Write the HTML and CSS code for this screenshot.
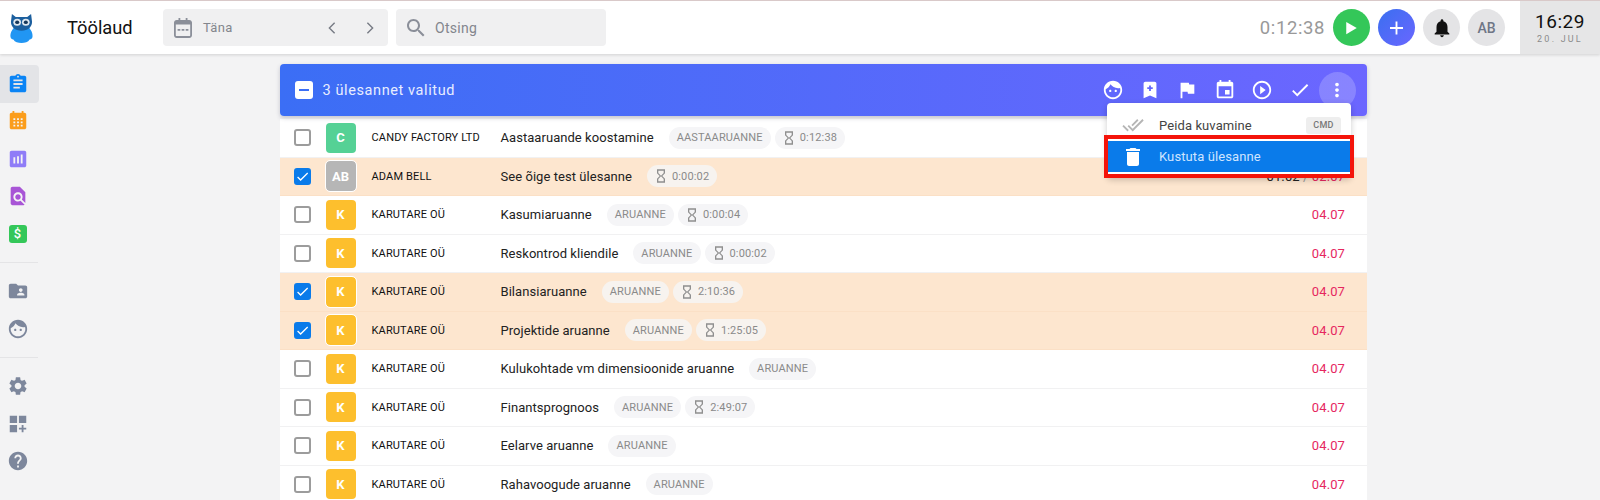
FILE: index.html
```html
<!DOCTYPE html>
<html lang="et">
<head>
<meta charset="utf-8">
<title>Töölaud</title>
<link rel="stylesheet" href="styles.css">
</head>
<body>
<svg class="sprite" xmlns="http://www.w3.org/2000/svg">
  <symbol id="i-hour" viewBox="0 0 24 24"><path d="M6 2v6h.01L6 8.01 10 12l-4 4 .01.01H6V22h12v-5.99h-.01L18 16l-4-4 4-3.99-.01-.01H18V2H6zm10 14.5V20H8v-3.5l4-4 4 4zm-4-5l-4-4V4h8v3.5l-4 4z"/></symbol>
  <symbol id="i-check" viewBox="0 0 24 24"><path d="M9 16.17L4.83 12l-1.42 1.41L9 19 21 7l-1.41-1.41z"/></symbol>
  <symbol id="i-face" viewBox="0 0 24 24"><path d="M9 11.75c-.69 0-1.25.56-1.25 1.25s.56 1.25 1.25 1.25 1.25-.56 1.25-1.25-.56-1.25-1.25-1.25zm6 0c-.69 0-1.25.56-1.25 1.25s.56 1.25 1.25 1.25 1.25-.56 1.25-1.25-.56-1.25-1.25-1.25zM12 2C6.48 2 2 6.48 2 12s4.48 10 10 10 10-4.48 10-10S17.52 2 12 2zm0 18c-4.41 0-8-3.59-8-8 0-.29.02-.58.05-.86 2.36-1.05 4.23-2.98 5.21-5.37C11.07 8.33 14.05 10 17.42 10c.78 0 1.53-.09 2.25-.26.21.71.33 1.47.33 2.26 0 4.41-3.59 8-8 8z"/></symbol>
</svg>

<header class="topbar">
  <svg class="owl" viewBox="0 0 24 34" preserveAspectRatio="none" xmlns="http://www.w3.org/2000/svg">
    <path fill="#2196f3" d="M4 17c-2 2-4 6-3.500 10 .3 2 1.500 3 3 3 1.500 3 5 4 8.500 4s7-1 8.500-4c1.500 0 2.700-1 3-3 .5-4-1.500-8-3.500-10z"/>
    <path fill="#1c5f9e" d="M2 1l4 3.500h12L22 1l1 9c0 6-4 10-11 10S1 16 1 10z"/>
    <circle cx="7.500" cy="10.500" r="4" fill="#dfe7ee"/>
    <circle cx="16.500" cy="10.500" r="4" fill="#dfe7ee"/>
    <circle cx="7.500" cy="10.500" r="2.100" fill="#16375a"/>
    <circle cx="16.500" cy="10.500" r="2.100" fill="#16375a"/>
  </svg>
  <h1 class="page-title">Töölaud</h1>
  <div class="field date-field">
    <svg class="field-icon" viewBox="0 0 20 22" xmlns="http://www.w3.org/2000/svg"><path fill="#8b8f99" fill-rule="evenodd" d="M5 0h2v2h6V0h2v2h2c1.700 0 3 1.300 3 3v14c0 1.700-1.300 3-3 3H3c-1.700 0-3-1.300-3-3V5c0-1.700 1.300-3 3-3h2zM2 7v12c0 .6.400 1 1 1h14c.6 0 1-.4 1-1V7zm2 5h3v2H4zm4.500 0h3v2h-3zm4.500 0h3v2h-3z"/></svg>
    <span class="field-label">Täna</span>
    <svg class="chev chev-left" viewBox="0 0 10 16" xmlns="http://www.w3.org/2000/svg"><path d="M8 2L2 8l6 6"/></svg>
    <svg class="chev" viewBox="0 0 10 16" xmlns="http://www.w3.org/2000/svg"><path d="M2 2l6 6-6 6"/></svg>
  </div>
  <div class="field search-field">
    <svg class="field-icon search-icon" viewBox="3 3 18 18" xmlns="http://www.w3.org/2000/svg"><path fill="#8b8f99" d="M15.500 14h-.79l-.28-.27C15.410 12.590 16 11.110 16 9.500 16 5.910 13.090 3 9.500 3S3 5.910 3 9.500 5.910 16 9.500 16c1.610 0 3.090-.59 4.230-1.570l.27.28v.79l5 4.990L20.490 19l-4.990-5zm-6 0C7.010 14 5 11.990 5 9.500S7.010 5 9.500 5 14 7.010 14 9.500 11.990 14 9.500 14z"/></svg>
    <span class="field-label">Otsing</span>
  </div>
  <div class="top-right">
    <span class="timer">0:12:38</span>
    <span class="round round-green"><svg viewBox="0 0 14 16" xmlns="http://www.w3.org/2000/svg"><path fill="#fff" d="M1 1l12 7-12 7z"/></svg></span>
    <span class="round round-blue"><svg viewBox="0 0 14 14" xmlns="http://www.w3.org/2000/svg"><path fill="#fff" d="M6 0h2v6h6v2H8v6H6V8H0V6h6z"/></svg></span>
    <span class="round round-gray"><svg class="bell" viewBox="0 0 24 24" xmlns="http://www.w3.org/2000/svg"><path fill="#111" d="M12 22c1.100 0 2-.9 2-2h-4c0 1.100.89 2 2 2zm6-6v-5c0-3.070-1.640-5.640-4.500-6.320V4c0-.83-.67-1.500-1.500-1.500s-1.500.67-1.500 1.500v.68C7.630 5.360 6 7.920 6 11v5l-2 2v1h16v-1l-2-2z"/></svg></span>
    <span class="round round-gray round-text">AB</span>
  </div>
  <div class="clock">
    <span class="clock-time">16:29</span>
    <span class="clock-date">20. JUL</span>
  </div>
</header>

<div class="layout">
  <nav class="sidebar">
    <a class="nav-item active"><svg viewBox="0 0 24 24" xmlns="http://www.w3.org/2000/svg"><path fill="#0a84f5" d="M19 3h-4.180C14.400 1.840 13.300 1 12 1c-1.300 0-2.400.84-2.820 2H5c-1.100 0-2 .9-2 2v14c0 1.100.9 2 2 2h14c1.100 0 2-.9 2-2V5c0-1.100-.9-2-2-2zm-7 0c.55 0 1 .45 1 1s-.45 1-1 1-1-.45-1-1 .45-1 1-1zm2 14H7v-2h7v2zm3-4H7v-2h10v2zm0-4H7V7h10v2z"/></svg></a>
    <a class="nav-item"><svg viewBox="0 0 24 24" xmlns="http://www.w3.org/2000/svg"><path fill="#fb9d1c" fill-rule="evenodd" d="M6 1h2v2h8V1h2v2h1c1.100 0 2 .9 2 2v14c0 1.100-.9 2-2 2H5c-1.100 0-2-.9-2-2V5c0-1.100.9-2 2-2h1zM7 9v2h2V9zm4 0v2h2V9zm4 0v2h2V9zm-8 3.500v2h2v-2zm4 0v2h2v-2zm4 0v2h2v-2zM7 16v2h2v-2zm4 0v2h2v-2zm4 0v2h2v-2z"/></svg></a>
    <a class="nav-item"><svg viewBox="0 0 24 24" xmlns="http://www.w3.org/2000/svg"><path fill="#8f7cf7" d="M19 3H5c-1.100 0-2 .9-2 2v14c0 1.100.9 2 2 2h14c1.100 0 2-.9 2-2V5c0-1.100-.9-2-2-2zM9 17H7v-7h2v7zm4 0h-2V9h2v8zm4 0h-2V7h2v10z"/></svg></a>
    <a class="nav-item"><svg viewBox="0 0 24 24" xmlns="http://www.w3.org/2000/svg"><path fill="#a855d6" d="M20 19.590V8l-6-6H6c-1.100 0-1.990.9-1.990 2L4 20c0 1.100.89 2 1.990 2H18c.45 0 .85-.15 1.190-.4l-4.430-4.430c-.8.52-1.740.83-2.760.83-2.760 0-5-2.240-5-5s2.240-5 5-5 5 2.240 5 5c0 1.020-.31 1.960-.83 2.750L20 19.590zM9 13c0 1.660 1.340 3 3 3s3-1.340 3-3-1.340-3-3-3-3 1.340-3 3z"/></svg></a>
    <a class="nav-item"><span class="dollar">$</span></a>
    <hr class="nav-rule">
    <a class="nav-item"><svg viewBox="0 0 24 24" xmlns="http://www.w3.org/2000/svg"><path fill="#7d879c" d="M20 6h-8l-2-2H4c-1.100 0-1.990.9-1.990 2L2 18c0 1.100.9 2 2 2h16c1.100 0 2-.9 2-2V8c0-1.100-.9-2-2-2zm-5 3c1.100 0 2 .9 2 2s-.9 2-2 2-2-.9-2-2 .9-2 2-2zm4 8h-8v-1c0-1.330 2.670-2 4-2s4 .67 4 2v1z"/></svg></a>
    <a class="nav-item"><svg class="gray-fill" viewBox="0 0 24 24" xmlns="http://www.w3.org/2000/svg"><use href="#i-face"/></svg></a>
    <hr class="nav-rule">
    <a class="nav-item"><svg viewBox="0 0 24 24" xmlns="http://www.w3.org/2000/svg"><path fill="#7d879c" d="M19.140 12.940c.04-.3.06-.61.06-.94 0-.32-.02-.64-.07-.94l2.030-1.580c.18-.14.23-.41.12-.61l-1.920-3.320c-.12-.22-.37-.29-.59-.22l-2.390.96c-.5-.38-1.030-.7-1.620-.94l-.36-2.540c-.04-.24-.24-.41-.48-.41h-3.840c-.24 0-.43.17-.47.41l-.36 2.540c-.59.24-1.130.57-1.620.94l-2.390-.96c-.22-.08-.47 0-.59.22L2.740 8.870c-.12.21-.08.47.12.61l2.030 1.580c-.05.3-.09.63-.09.94s.02.64.07.94l-2.030 1.580c-.18.14-.23.41-.12.61l1.920 3.320c.12.22.37.29.59.22l2.390-.96c.5.38 1.030.7 1.620.94l.36 2.540c.05.24.24.41.48.41h3.840c.24 0 .44-.17.47-.41l.36-2.540c.59-.24 1.130-.56 1.620-.94l2.390.96c.22.08.47 0 .59-.22l1.920-3.320c.12-.22.07-.47-.12-.61l-2.010-1.580zM12 15.600c-1.980 0-3.600-1.620-3.600-3.600s1.620-3.600 3.600-3.600 3.600 1.620 3.600 3.600-1.620 3.600-3.600 3.600z"/></svg></a>
    <a class="nav-item"><svg viewBox="0 0 24 24" xmlns="http://www.w3.org/2000/svg"><path fill="#7d879c" d="M3 3h8v8H3zM13 3h8v8h-8zM3 13h8v8H3zM16 13h2v3h3v2h-3v3h-2v-3h-3v-2h3z"/></svg></a>
    <a class="nav-item"><svg viewBox="0 0 24 24" xmlns="http://www.w3.org/2000/svg"><path fill="#7d879c" d="M12 2C6.480 2 2 6.480 2 12s4.480 10 10 10 10-4.480 10-10S17.520 2 12 2zm1 17h-2v-2h2v2zm2.070-7.750l-.9.92C13.450 12.900 13 13.500 13 15h-2v-.5c0-1.100.45-2.100 1.170-2.830l1.240-1.260c.37-.36.59-.86.59-1.410 0-1.100-.9-2-2-2s-2 .9-2 2H8c0-2.210 1.790-4 4-4s4 1.790 4 4c0 .88-.36 1.680-.93 2.250z"/></svg></a>
  </nav>

  <main class="main">
    <section class="card">
      <div class="bulk-bar">
        <span class="bulk-check"></span>
        <span class="bulk-text">3 ülesannet valitud</span>
        <div class="bulk-actions">
          <span class="bulk-btn"><svg viewBox="0 0 24 24" xmlns="http://www.w3.org/2000/svg"><use href="#i-face"/></svg></span>
          <span class="bulk-btn"><svg viewBox="0 0 24 24" xmlns="http://www.w3.org/2000/svg"><path fill-rule="evenodd" d="M17 3H7c-1.100 0-2 .9-2 2v16l7-3 7 3V5c0-1.100-.9-2-2-2zm-2 8h-2v2h-2v-2H9V9h2V7h2v2h2v2z"/></svg></span>
          <span class="bulk-btn"><svg viewBox="0 0 24 24" xmlns="http://www.w3.org/2000/svg"><path d="M14.400 6L14 4H5v17h2v-7h5.600l.4 2h7V6z"/></svg></span>
          <span class="bulk-btn"><svg viewBox="0 0 24 24" xmlns="http://www.w3.org/2000/svg"><path d="M17 12h-5v5h5v-5zM16 1v2H8V1H6v2H5c-1.110 0-1.990.9-1.990 2L3 19c0 1.100.89 2 2 2h14c1.100 0 2-.9 2-2V5c0-1.100-.9-2-2-2h-1V1h-2zm3 18H5V8h14v11z"/></svg></span>
          <span class="bulk-btn"><svg viewBox="0 0 24 24" xmlns="http://www.w3.org/2000/svg"><path d="M10 16.500l6-4.500-6-4.500v9zM12 2C6.480 2 2 6.480 2 12s4.480 10 10 10 10-4.480 10-10S17.520 2 12 2zm0 18c-4.410 0-8-3.590-8-8s3.590-8 8-8 8 3.590 8 8-3.590 8-8 8z"/></svg></span>
          <span class="bulk-btn"><svg viewBox="0 0 24 24" xmlns="http://www.w3.org/2000/svg"><use href="#i-check"/></svg></span>
          <span class="bulk-btn bulk-more"><svg viewBox="0 0 24 24" xmlns="http://www.w3.org/2000/svg"><path d="M12 8c1.100 0 2-.9 2-2s-.9-2-2-2-2 .9-2 2 .9 2 2 2zm0 2c-1.100 0-2 .9-2 2s.9 2 2 2 2-.9 2-2-.9-2-2-2zm0 6c-1.100 0-2 .9-2 2s.9 2 2 2 2-.9 2-2-.9-2-2-2z"/></svg></span>
        </div>
        <div class="menu">
          <div class="menu-item menu-first">
            <svg class="menu-icon done-icon" viewBox="0 0 24 24" xmlns="http://www.w3.org/2000/svg"><path d="M18 7l-1.410-1.410-6.340 6.340 1.410 1.410L18 7zm4.240-1.410L11.660 16.170 7.480 12l-1.410 1.410L11.660 19l12-12-1.420-1.410zM.41 13.410L6 19l1.410-1.410L1.830 12 .41 13.410z"/></svg>
            <span class="menu-label">Peida kuvamine</span>
            <span class="kbd">CMD</span>
          </div>
          <div class="menu-item menu-danger">
            <svg class="menu-icon trash-icon" viewBox="5 3 14 18" xmlns="http://www.w3.org/2000/svg"><path d="M6 19c0 1.100.9 2 2 2h8c1.100 0 2-.9 2-2V7H6v12zM19 4h-3.500l-1-1h-5l-1 1H5v2h14V4z"/></svg>
            <span class="menu-label">Kustuta ülesanne</span>
          </div>
        </div>
      </div>

      <div class="rows">
        <div class="row">
          <span class="check"></span><span class="avatar green">C</span><span class="company">CANDY FACTORY LTD</span>
          <span class="task">Aastaaruande koostamine</span><span class="chip">AASTAARUANNE</span>
          <span class="chip"><svg class="hour" viewBox="0 0 24 24" xmlns="http://www.w3.org/2000/svg"><use href="#i-hour"/></svg>0:12:38</span>
        </div>
        <div class="row selected">
          <span class="check on"><svg viewBox="0 0 24 24" xmlns="http://www.w3.org/2000/svg"><use href="#i-check"/></svg></span><span class="avatar gray">AB</span><span class="company">ADAM BELL</span>
          <span class="task">See õige test ülesanne</span>
          <span class="chip"><svg class="hour" viewBox="0 0 24 24" xmlns="http://www.w3.org/2000/svg"><use href="#i-hour"/></svg>0:00:02</span>
          <span class="date"><span class="date-start">01.02 <span class="date-sep">/</span></span> 02.07</span>
        </div>
        <div class="row">
          <span class="check"></span><span class="avatar amber">K</span><span class="company">KARUTARE OÜ</span>
          <span class="task">Kasumiaruanne</span><span class="chip">ARUANNE</span>
          <span class="chip"><svg class="hour" viewBox="0 0 24 24" xmlns="http://www.w3.org/2000/svg"><use href="#i-hour"/></svg>0:00:04</span>
          <span class="date">04.07</span>
        </div>
        <div class="row">
          <span class="check"></span><span class="avatar amber">K</span><span class="company">KARUTARE OÜ</span>
          <span class="task">Reskontrod kliendile</span><span class="chip">ARUANNE</span>
          <span class="chip"><svg class="hour" viewBox="0 0 24 24" xmlns="http://www.w3.org/2000/svg"><use href="#i-hour"/></svg>0:00:02</span>
          <span class="date">04.07</span>
        </div>
        <div class="row selected">
          <span class="check on"><svg viewBox="0 0 24 24" xmlns="http://www.w3.org/2000/svg"><use href="#i-check"/></svg></span><span class="avatar amber">K</span><span class="company">KARUTARE OÜ</span>
          <span class="task">Bilansiaruanne</span><span class="chip">ARUANNE</span>
          <span class="chip"><svg class="hour" viewBox="0 0 24 24" xmlns="http://www.w3.org/2000/svg"><use href="#i-hour"/></svg>2:10:36</span>
          <span class="date">04.07</span>
        </div>
        <div class="row selected">
          <span class="check on"><svg viewBox="0 0 24 24" xmlns="http://www.w3.org/2000/svg"><use href="#i-check"/></svg></span><span class="avatar amber">K</span><span class="company">KARUTARE OÜ</span>
          <span class="task">Projektide aruanne</span><span class="chip">ARUANNE</span>
          <span class="chip"><svg class="hour" viewBox="0 0 24 24" xmlns="http://www.w3.org/2000/svg"><use href="#i-hour"/></svg>1:25:05</span>
          <span class="date">04.07</span>
        </div>
        <div class="row">
          <span class="check"></span><span class="avatar amber">K</span><span class="company">KARUTARE OÜ</span>
          <span class="task">Kulukohtade vm dimensioonide aruanne</span><span class="chip">ARUANNE</span>
          <span class="date">04.07</span>
        </div>
        <div class="row">
          <span class="check"></span><span class="avatar amber">K</span><span class="company">KARUTARE OÜ</span>
          <span class="task">Finantsprognoos</span><span class="chip">ARUANNE</span>
          <span class="chip"><svg class="hour" viewBox="0 0 24 24" xmlns="http://www.w3.org/2000/svg"><use href="#i-hour"/></svg>2:49:07</span>
          <span class="date">04.07</span>
        </div>
        <div class="row">
          <span class="check"></span><span class="avatar amber">K</span><span class="company">KARUTARE OÜ</span>
          <span class="task">Eelarve aruanne</span><span class="chip">ARUANNE</span>
          <span class="date">04.07</span>
        </div>
        <div class="row">
          <span class="check"></span><span class="avatar amber">K</span><span class="company">KARUTARE OÜ</span>
          <span class="task">Rahavoogude aruanne</span><span class="chip">ARUANNE</span>
          <span class="date">04.07</span>
        </div>
      </div>
    </section>
  </main>
</div>
</body>
</html>
```
FILE: styles.css
```css
* { box-sizing: border-box; }
html, body { height: 100%; }
body {
  margin: 0;
  height: 500px;
  overflow: hidden;
  background: #f3f3f4;
  font-family: Roboto, "Liberation Sans", sans-serif;
  color: #222;
}
.sprite { display: none; }

/* Top bar */
.topbar {
  display: flex;
  align-items: center;
  height: 54px;
  background: #fff;
  border-top: 1px solid #d9c9c9;
  box-shadow: 0 1px 3px rgba(0, 0, 0, .14);
  position: relative;
  z-index: 2;
}
.owl { width: 23px; height: 30px; margin-left: 10px; flex: none; }
.page-title {
  margin: 0 0 0 34px;
  width: 96px;
  flex: none;
  font-size: 18.300px;
  font-weight: 400;
  color: #111;
}
.field {
  display: flex;
  align-items: center;
  height: 37px;
  background: #f0f0f1;
  border-radius: 4px;
  flex: none;
}
.date-field { width: 225px; padding-left: 11px; margin-right: 8px; }
.search-field { width: 210px; padding-left: 11px; }
.field-icon { width: 18px; height: 20px; flex: none; }
.search-icon { height: 18px; }
.field-label { margin-left: 11px; font-size: 13px; color: #83868d; letter-spacing: .3px; }
.search-field .field-label { margin-left: 10px; font-size: 14px; }
.chev { width: 10px; height: 14px; margin-left: 28px; flex: none; }
.chev path { fill: none; stroke: #777b84; stroke-width: 1.600; }
.chev-left { margin-left: auto; }
.date-field .chev:last-child { margin-right: 13px; }

.top-right { display: flex; align-items: center; gap: 8px; margin-left: auto; padding-right: 15px; }
.timer { font-size: 18.500px; color: #999; letter-spacing: .6px; }
.round {
  width: 37px;
  height: 37px;
  border-radius: 50%;
  display: flex;
  align-items: center;
  justify-content: center;
  flex: none;
}
.round svg { width: 13px; height: 14px; }
.round .bell { width: 22px; height: 22px; }
.round-green { background: #34c759; }
.round-blue { background: linear-gradient(135deg, #3a6ff0, #6a66ff); }
.round-gray { background: #e4e4e6; }
.round-text { font-size: 14px; font-weight: 500; color: #6f7686; }
.clock {
  width: 80px;
  height: 53px;
  background: #e6e6e7;
  display: flex;
  flex-direction: column;
  align-items: center;
  justify-content: center;
  flex: none;
}
.clock-time { font-size: 19px; line-height: 22px; color: #111; letter-spacing: .5px; }
.clock-date { font-size: 9px; line-height: 12px; color: #8b8b8b; letter-spacing: 2.200px; }

/* Layout */
.layout { display: flex; }
.sidebar { width: 46.500px; flex: none; padding-top: 11px; }
.nav-item {
  display: flex;
  align-items: center;
  justify-content: center;
  width: 39px;
  height: 37.500px;
  padding-right: 4px;
  border-radius: 0 4px 4px 0;
}
.nav-item svg { width: 22px; height: 22px; flex: none; }
.nav-item.active { background: #e3e4e7; }
.gray-fill { fill: #7d879c; }
.dollar {
  width: 18px;
  height: 18px;
  border-radius: 3px;
  background: #34c759;
  color: #fff;
  font-size: 13px;
  font-weight: 500;
  line-height: 18px;
  text-align: center;
}
.nav-rule {
  width: 38px;
  height: 1px;
  margin: 9.500px 0;
  border: 0;
  background: #e4e4e6;
}
.main { flex: 1; display: flex; justify-content: center; padding-top: 10px; min-width: 0; }
.card { width: 1087.500px; flex: none; }

/* Bulk bar */
.bulk-bar {
  position: relative;
  display: flex;
  align-items: center;
  height: 52px;
  padding: 0 11.500px 0 15px;
  margin-bottom: 3px;
  border-radius: 4px;
  background: linear-gradient(90deg, #3b6ef5, #6c66ff);
  color: #fff;
  box-shadow: 0 2px 4px rgba(60, 60, 90, .25);
}
.bulk-check {
  width: 18px;
  height: 18px;
  border-radius: 3px;
  background: #fff;
  display: flex;
  align-items: center;
  justify-content: center;
  flex: none;
}
.bulk-check::before { content: ""; width: 10px; height: 2px; background: #3b6ef5; }
.bulk-text { margin-left: 10px; font-size: 14.500px; letter-spacing: .6px; color: #e8edff; }
.bulk-actions { display: flex; align-items: center; gap: .4px; margin-left: auto; }
.bulk-btn {
  width: 37px;
  height: 37px;
  border-radius: 50%;
  display: flex;
  align-items: center;
  justify-content: center;
  fill: #fff;
}
.bulk-btn svg { width: 22px; height: 22px; }
.bulk-more { background: rgba(255, 255, 255, .2); }

/* Dropdown menu */
.menu {
  position: absolute;
  left: 827.500px;
  top: 39px;
  width: 244px;
  background: #fff;
  border-radius: 4px;
  box-shadow: 0 2px 6px rgba(0, 0, 0, .2);
  z-index: 3;
}
.menu-item {
  display: flex;
  align-items: center;
  height: 32px;
  padding: 0 10px 0 15px;
  color: #444;
  font-size: 13px;
  letter-spacing: .1px;
}
.menu-first { padding-top: 12px; }
.menu-icon { width: 22px; height: 22px; flex: none; }
.done-icon { fill: #b5b5b5; }
.menu-label { margin-left: 15px; }
.kbd {
  margin-left: auto;
  width: 35px;
  height: 17px;
  border-radius: 3px;
  background: #eee;
  color: #777;
  font-size: 9px;
  font-weight: 500;
  line-height: 17px;
  text-align: center;
  letter-spacing: .3px;
}
.menu-danger {
  height: 43px;
  margin: 0 -3px;
  padding-left: 13px;
  border: 4px solid #f4140a;
  background: #0a7bea;
  box-shadow: inset 0 2px 0 #fff, inset 0 -2px 0 #fff;
  color: #cfe5ff;
}
.trash-icon { fill: #fff; width: 14px; height: 18px; margin: 0 4px 0 5px; }
.menu-danger .menu-label { margin-left: 15px; }

/* Rows */
.rows { background: #fff; }
.row {
  display: flex;
  align-items: center;
  height: 38.500px;
  padding: 0 22px 0 14px;
  border-bottom: 1px solid #f1f1f2;
}
.row.selected { background: #fde6cf; border-bottom-color: #fbe0c6; }
.check {
  width: 17px;
  height: 17px;
  border: 2px solid #9c9c9c;
  border-radius: 3px;
  background: #fff;
  flex: none;
  margin-right: 15px;
}
.check.on {
  display: flex;
  align-items: center;
  justify-content: center;
  background: #0a7bea;
  border-color: #0a7bea;
  fill: #fff;
}
.check.on svg { width: 15px; height: 15px; flex: none; }
.avatar {
  width: 30px;
  height: 30px;
  border-radius: 4px;
  display: flex;
  align-items: center;
  justify-content: center;
  color: #fff;
  font-size: 13px;
  font-weight: 700;
  flex: none;
}
.selected .avatar { outline: 1px solid #fff; }
.green { background: #55d195; }
.gray { background: #b6b6b6; }
.amber { background: #fdbf2d; }
.company {
  width: 145px;
  padding-left: 16px;
  flex: none;
  font-size: 11px;
  font-weight: 450;
  color: #111;
  letter-spacing: .15px;
  white-space: nowrap;
}
.task { margin-right: 15px; font-size: 13px; color: #222; letter-spacing: .05px; white-space: nowrap; }
.chip {
  display: inline-flex;
  align-items: center;
  height: 22px;
  margin-right: 4px;
  padding: 0 8px;
  border-radius: 11px;
  background: #f5f5f7;
  color: #8a8a8a;
  font-size: 11px;
  letter-spacing: .15px;
  white-space: nowrap;
}
.selected .chip { background: #f7f3ef; }
.hour { width: 16px; height: 16px; margin: 0 3px 0 -2px; fill: #8f8f8f; flex: none; }
.date { margin-left: auto; font-size: 13px; color: #e6275f; letter-spacing: .1px; white-space: nowrap; }
.date-start { color: #222; }
.date-sep { color: #999; }
```
